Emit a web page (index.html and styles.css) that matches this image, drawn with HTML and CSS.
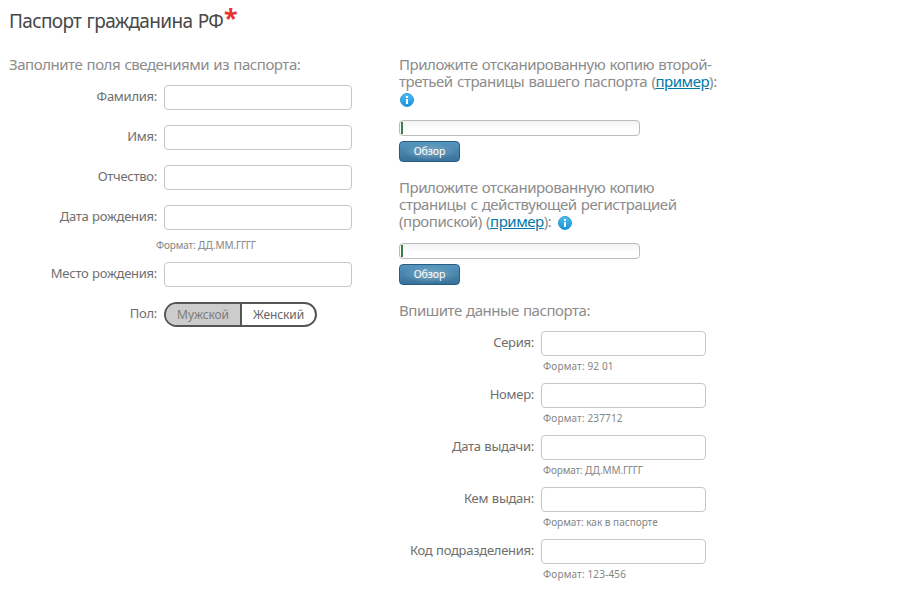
FILE: index.html
```html
<!DOCTYPE html>
<html lang="ru">
<head>
    <meta charset="UTF-8">
    <meta name="viewport" content="width=device-width, initial-scale=1.0">
    <title>Паспорт гражданина РФ</title>
    <link rel="stylesheet" href="styles.css">
</head>
<body>

    <h1><span class="title">Паспорт гражданина РФ</span><span class="required">*</span></h1>

    <form class="columns">
        <div class="personal">
            <h2>Заполните поля сведениями из паспорта:</h2>

            <div class="row">
                <label for="surname">Фамилия:</label>
                <input type="text" id="surname">
            </div>
            <div class="row">
                <label for="name">Имя:</label>
                <input type="text" id="name">
            </div>
            <div class="row">
                <label for="patronymic">Отчество:</label>
                <input type="text" id="patronymic">
            </div>
            <div class="row birth-date">
                <label for="birth-date">Дата рождения:</label>
                <input type="text" id="birth-date">
            </div>
            <p class="hint">Формат: ДД.ММ.ГГГГ</p>
            <div class="row">
                <label for="birth-place">Место рождения:</label>
                <input type="text" id="birth-place">
            </div>
            <div class="row">
                <label>Пол:</label>
                <div class="gender">
                    <span class="male">Мужской</span>
                    <span class="female">Женский</span>
                </div>
            </div>
        </div>

        <div class="documents">
            <div class="upload">
                <h2>Приложите отсканированную копию второй-<br>третьей страницы вашего паспорта (<a href="#">пример</a>):<br><svg class="info" viewBox="0 0 14 14"><defs><linearGradient id="blue" x1="0" y1="0" x2="0" y2="1"><stop offset="0" stop-color="#54bdf2"/><stop offset="1" stop-color="#1592de"/></linearGradient></defs><circle cx="7" cy="7" r="6.5" fill="url(#blue)" stroke="#2a9bd4"/><path d="M6 3h2v2H6zM6 6h2v5H6z" fill="#fff"/></svg></h2>
                <div class="progress"><div class="bar"></div></div>
                <button type="button">Обзор</button>
            </div>

            <div class="upload">
                <h2>Приложите отсканированную копию<br>страницы с действующей регистрацией<br>(пропиской) (<a href="#">пример</a>): <svg class="info" viewBox="0 0 14 14"><circle cx="7" cy="7" r="6.5" fill="url(#blue)" stroke="#2a9bd4"/><path d="M6 3h2v2H6zM6 6h2v5H6z" fill="#fff"/></svg></h2>
                <div class="progress"><div class="bar"></div></div>
                <button type="button">Обзор</button>
            </div>

            <h2>Впишите данные паспорта:</h2>
            <div class="row">
                <label for="series">Серия:</label>
                <input type="text" id="series">
            </div>
            <p class="hint numeric">Формат: 92 01</p>
            <div class="row">
                <label for="number">Номер:</label>
                <input type="text" id="number">
            </div>
            <p class="hint numeric">Формат: 237712</p>
            <div class="row">
                <label for="issue-date">Дата выдачи:</label>
                <input type="text" id="issue-date">
            </div>
            <p class="hint">Формат: ДД.ММ.ГГГГ</p>
            <div class="row">
                <label for="issued-by">Кем выдан:</label>
                <input type="text" id="issued-by">
            </div>
            <p class="hint text">Формат: как в паспорте</p>
            <div class="row">
                <label for="code">Код подразделения:</label>
                <input type="text" id="code">
            </div>
            <p class="hint numeric">Формат: 123-456</p>
        </div>
    </form>

</body>
</html>
```
FILE: styles.css
```css
body {
    margin: 0;
    padding: 8px 0 0 9px;
    background-color: #fff;
    color: #666;
    font-family: 'Noto Sans', 'Open Sans', sans-serif;
    white-space: nowrap;
}

h1, h2, p {
    margin: 0;
    font-weight: normal;
}

h1 {
    display: flex;
    height: 48px;
    color: #484848;
    font-size: 19px;
    line-height: 26px;
    letter-spacing: -0.65px;
    word-spacing: 1px;
}

.title {
    width: 214px;
}

.required {
    margin-left: 1px;
    color: #e9322d;
    font-size: 25px;
    font-weight: bold;
    line-height: 19px;
}

h2 {
    color: #8c8c8c;
    font-size: 15px;
    line-height: 17px;
    letter-spacing: -0.46px;
    word-spacing: 0.8px;
}

a {
    color: #0078a8;
}

.columns {
    display: grid;
    grid-template-columns: 390px 320px;
    align-items: start;
}

.personal h2 {
    margin-bottom: 12px;
}

.row {
    display: flex;
    gap: 7px;
    height: 25px;
}

.personal .row {
    margin-bottom: 15px;
}

.personal .birth-date {
    margin-bottom: 8px;
}

label {
    width: 148px;
    color: #6e6e6e;
    font-size: 13px;
    line-height: 23px;
    letter-spacing: -0.27px;
    word-spacing: 0.5px;
    text-align: right;
}

input {
    box-sizing: border-box;
    width: 188px;
    height: 25px;
    border: 1px solid #c6c6c6;
    border-radius: 4px;
    background-color: #fff;
}

.hint {
    color: #858585;
    font-size: 10px;
    line-height: 14px;
    letter-spacing: -0.15px;
}

.hint.text {
    letter-spacing: 0;
}

.hint.numeric {
    letter-spacing: 0.15px;
}

.personal .hint {
    margin: 0 0 10px 147px;
}

.gender {
    box-sizing: border-box;
    display: flex;
    width: 153px;
    height: 25px;
    border: 2px solid #555;
    border-radius: 13px;
    overflow: hidden;
    font-size: 12px;
    line-height: 21px;
    letter-spacing: -0.1px;
    text-align: center;
}

.male {
    width: 74px;
    border-right: 2px solid #555;
    background-color: #ccc;
    color: #7c7c7c;
}

.female {
    flex: 1;
}

.upload {
    height: 123px;
}

.upload h2 {
    height: 64px;
}

.info {
    display: inline-block;
    width: 14px;
    height: 14px;
    margin-left: 1px;
    vertical-align: -3px;
}

a ~ .info {
    margin-left: 2px;
}

a ~ br + .info {
    margin-left: 1px;
}

.progress {
    box-sizing: border-box;
    width: 241px;
    height: 16px;
    padding: 1px;
    border: 1px solid #bbb;
    border-radius: 4px;
    background: linear-gradient(#f2f2f2, #fff 60%);
}

.bar {
    width: 2px;
    height: 12px;
    background-color: #398046;
}

button {
    display: block;
    width: 61px;
    height: 21px;
    margin-top: 5px;
    padding: 0;
    border: 1px solid #285d82;
    border-radius: 4px;
    background: radial-gradient(ellipse at center, #82a9c2, transparent 65%), linear-gradient(#5596be, #39719a);
    color: #fff;
    font-family: inherit;
    font-size: 10.5px;
    line-height: 17px;
    letter-spacing: -0.1px;
}

.documents > h2 {
    margin-bottom: 12px;
}

.documents label {
    width: 135px;
}

.documents input {
    width: 165px;
}

.documents .hint {
    margin: 3px 0 10px 144px;
}
```
